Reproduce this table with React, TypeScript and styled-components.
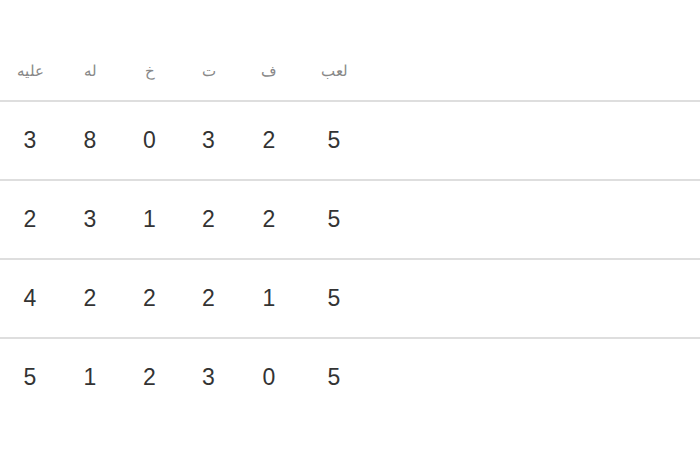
import styled, { createGlobalStyle } from "styled-components";

const GlobalStyle = createGlobalStyle`
    html, body {
        margin: 0;
        padding: 0;
        background: #fff;
    }
`

const Page = styled.div`
    width: 700px;
    height: 450px;
    overflow: hidden;
    padding-top: 42px;
    box-sizing: border-box;
    font-family: "Liberation Sans", Arial, "Noto Sans", sans-serif;
`

const Row = styled.div<{ $head?: boolean }>`
    direction: rtl;
    display: grid;
    grid-template-columns: 1fr 68px 62px 59px 59px 60px 60px;
    align-items: center;
    height: ${p => (p.$head ? "58px" : "79px")};
    box-sizing: border-box;
    border-top: ${p => (p.$head ? "none" : "2px solid #dedede")};
`

const HeadCell = styled.div`
    text-align: center;
    font-size: 15px;
    color: #888;
`

const Cell = styled.div`
    text-align: center;
    font-size: 23px;
    color: #333;
`

const headers = ["لعب", "ف", "ت", "خ", "له", "عليه"];

const rows = [
    [5, 2, 3, 0, 8, 3],
    [5, 2, 2, 1, 3, 2],
    [5, 1, 2, 2, 2, 4],
    [5, 0, 3, 2, 1, 5],
];

export default function App() {
    return <>
        <GlobalStyle />
        <Page>
            <Row $head>
                <HeadCell />
                {headers.map(h => <HeadCell key={h}>{h}</HeadCell>)}
            </Row>
            {rows.map((r, i) => (
                <Row key={i}>
                    <Cell />
                    {r.map((n, j) => <Cell key={j}>{n}</Cell>)}
                </Row>
            ))}
        </Page>
    </>
}
